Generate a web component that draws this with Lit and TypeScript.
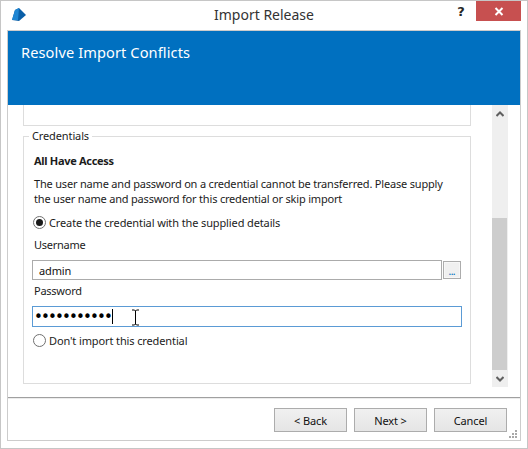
import { LitElement, css, html } from 'lit';
import { customElement } from 'lit/decorators.js';

@customElement('app-root')
export class AppRoot extends LitElement {
  static override styles = css`
    :host {
      display: block;
      box-sizing: border-box;
      width: 528px;
      height: 449px;
      position: relative;
      background: #ffffff;
      border: 1px solid #c6c6c6;
      font-family: 'Noto Sans', 'Open Sans', sans-serif;
      font-size: 11px;
      letter-spacing: -0.12px;
      color: #1c1c1c;
      overflow: hidden;
    }

    * {
      box-sizing: border-box;
    }

    .titlebar {
      position: relative;
      display: flex;
      align-items: center;
      justify-content: center;
      height: 29px;
      padding-bottom: 2px;
      font-size: 14px;
      letter-spacing: 0;
      color: #333333;
    }

    .logo {
      position: absolute;
      left: 10px;
      top: 6px;
    }

    .controls {
      position: absolute;
      top: 0;
      right: 6px;
      display: flex;
      align-items: flex-start;
    }

    .help {
      width: 18px;
      margin-right: 6px;
      font-family: 'DejaVu Sans', sans-serif;
      font-size: 13px;
      font-weight: 700;
      line-height: 21px;
      color: #262626;
      text-align: center;
    }

    .close {
      display: flex;
      align-items: center;
      justify-content: center;
      width: 45px;
      height: 20px;
      background: #c75050;
    }

    .frame {
      display: flex;
      flex-direction: column;
      height: 411px;
      margin: 0 6px;
      border: 1px solid #cccccc;
    }

    .banner {
      height: 74px;
      padding: 10px 13px;
      background: #0070c0;
      color: #ffffff;
      font-size: 14.6px;
      letter-spacing: 0.1px;
      line-height: 22px;
    }

    .body {
      display: flex;
      height: 292px;
    }

    .scroller {
      width: 484px;
      padding: 0 21px 0 15px;
    }

    .prev-card {
      height: 21px;
      border-left: 1px solid #dddddd;
      border-right: 1px solid #dddddd;
      border-bottom: 1px solid #dddddd;
    }

    fieldset {
      display: block;
      height: 256px;
      margin: 2px 0 0;
      padding: 2px 8px 0;
      border: 1px solid #dddddd;
      min-width: 0;
    }

    legend {
      margin-left: -3px;
      padding: 0 3px;
      line-height: 16px;
      color: #1c1c1c;
    }

    .heading {
      margin: 7px 0 0 2px;
      font-weight: 700;
      letter-spacing: -0.3px;
      line-height: 16px;
    }

    .info {
      margin: 7px 0 0 2px;
      letter-spacing: -0.19px;
      line-height: 15px;
      white-space: nowrap;
    }

    .radio {
      display: flex;
      align-items: center;
      gap: 3px;
      height: 16px;
      margin-top: 8px;
    }

    .radio.second {
      margin-top: 5px;
    }

    .radio .ring {
      display: flex;
      align-items: center;
      justify-content: center;
      width: 13px;
      height: 13px;
      margin-left: 1px;
      border: 1px solid #707070;
      border-radius: 50%;
      flex: none;
    }

    .radio .dot {
      width: 7px;
      height: 7px;
      border-radius: 50%;
      background: #1a1a1a;
    }

    .label {
      margin: 7px 0 0 2px;
      letter-spacing: -0.25px;
      line-height: 16px;
    }

    .label.tight {
      margin-top: 3px;
    }

    .input-row {
      display: flex;
      align-items: center;
      gap: 1px;
      margin-top: 7px;
    }

    .input {
      display: flex;
      align-items: center;
      height: 20px;
      padding-left: 6px;
      border: 1px solid #ababab;
      width: 410px;
      color: #111111;
    }

    .browse {
      display: flex;
      align-items: flex-end;
      justify-content: center;
      width: 18px;
      height: 18px;
      border: 1px solid #acacac;
      background: #f0f0f0;
      box-shadow: inset 0 0 0 1px #f7f7f7;
      color: #0070c0;
      font-size: 8px;
      font-weight: 700;
      line-height: 12px;
    }

    .password {
      position: relative;
      width: 430px;
      height: 21px;
      margin-top: 7px;
      padding-left: 1px;
      border-color: #5b9bd5;
    }

    .dots {
      font-family: 'DejaVu Sans', sans-serif;
      font-size: 15px;
      letter-spacing: -1.85px;
      line-height: 18px;
      color: #000000;
    }

    .caret {
      width: 1px;
      height: 15px;
      margin-left: 1px;
      background: #000000;
    }

    .ibeam {
      position: absolute;
      left: 98px;
      top: 2px;
    }

    .scrollbar {
      display: flex;
      flex-direction: column;
      width: 16px;
      height: 282px;
      background: #efefef;
    }

    .arrow {
      display: flex;
      align-items: center;
      justify-content: center;
      height: 17px;
      flex: none;
    }

    .track {
      height: 96px;
      flex: none;
    }

    .thumb {
      width: 15px;
      height: 152px;
      background: #cdcdcd;
      flex: none;
    }

    .footer {
      flex: 1;
      display: flex;
      justify-content: flex-end;
      gap: 7px;
      padding: 10px 13px 0 0;
      border-top: 1px solid #a0a0a0;
      box-shadow: inset 0 1px 0 #ececec;
      position: relative;
    }

    .btn {
      display: flex;
      align-items: center;
      justify-content: center;
      width: 73px;
      height: 24px;
      border: 1px solid #acacac;
      background: linear-gradient(#f0f0f0, #e5e5e5);
      color: #111111;
    }

    .grip {
      position: absolute;
      right: 2px;
      bottom: 1px;
    }
  `;

  override render() {
    return html`
      <div class="titlebar">
        <svg class="logo" width="17" height="17" viewBox="0 0 17 17">
          <path d="M4 3 L8 1 L15 8 L8 14 L1 13 Z" fill="#0a5fa8" />
          <path d="M4 3 L8 1 L7 13 L1 13 Z" fill="#1f86d3" />
        </svg>
        Import Release
        <div class="controls">
          <div class="help">?</div>
          <div class="close">
            <svg width="10" height="9" viewBox="0 0 10 9">
              <path d="M1.5 1 L8.5 8 M8.5 1 L1.5 8" stroke="#ffffff" stroke-width="2" fill="none" />
            </svg>
          </div>
        </div>
      </div>
      <div class="frame">
        <div class="banner">Resolve Import Conflicts</div>
        <div class="body">
          <div class="scroller">
            <div class="prev-card"></div>
            <fieldset>
              <legend>Credentials</legend>
              <div class="heading">All Have Access</div>
              <div class="info">
                The user name and password on a credential cannot be transferred. Please supply<br />
                the user name and password for this credential or skip import
              </div>
              <div class="radio">
                <span class="ring"><span class="dot"></span></span>
                Create the credential with the supplied details
              </div>
              <div class="label">Username</div>
              <div class="input-row">
                <div class="input">admin</div>
                <div class="browse">...</div>
              </div>
              <div class="label tight">Password</div>
              <div class="input password">
                <span class="dots">•••••••••••</span>
                <span class="caret"></span>
                <svg class="ibeam" width="9" height="17" viewBox="0 0 9 17">
                  <path d="M1 1 H3.5 L4.5 2 L5.5 1 H8 M4.5 2 V15 M1 16 H3.5 L4.5 15 L5.5 16 H8" stroke="#000000" fill="none" />
                </svg>
              </div>
              <div class="radio second">
                <span class="ring"></span>
                Don't import this credential
              </div>
            </fieldset>
          </div>
          <div class="scrollbar">
            <div class="arrow">
              <svg width="8" height="6" viewBox="0 0 8 6">
                <path d="M0.5 5 L4 1.5 L7.5 5" stroke="#606060" stroke-width="2" fill="none" />
              </svg>
            </div>
            <div class="track"></div>
            <div class="thumb"></div>
            <div class="arrow">
              <svg width="8" height="6" viewBox="0 0 8 6">
                <path d="M0.5 1 L4 4.5 L7.5 1" stroke="#606060" stroke-width="2" fill="none" />
              </svg>
            </div>
          </div>
        </div>
        <div class="footer">
          <div class="btn">&lt; Back</div>
          <div class="btn">Next &gt;</div>
          <div class="btn">Cancel</div>
          <svg class="grip" width="9" height="9" viewBox="0 0 9 9" fill="#a8a8a8">
            <rect x="6" y="0" width="2" height="2" />
            <rect x="3" y="3" width="2" height="2" />
            <rect x="6" y="3" width="2" height="2" />
            <rect x="0" y="6" width="2" height="2" />
            <rect x="3" y="6" width="2" height="2" />
            <rect x="6" y="6" width="2" height="2" />
          </svg>
        </div>
      </div>
    `;
  }
}

declare global {
  interface HTMLElementTagNameMap {
    'app-root': AppRoot;
  }
}
